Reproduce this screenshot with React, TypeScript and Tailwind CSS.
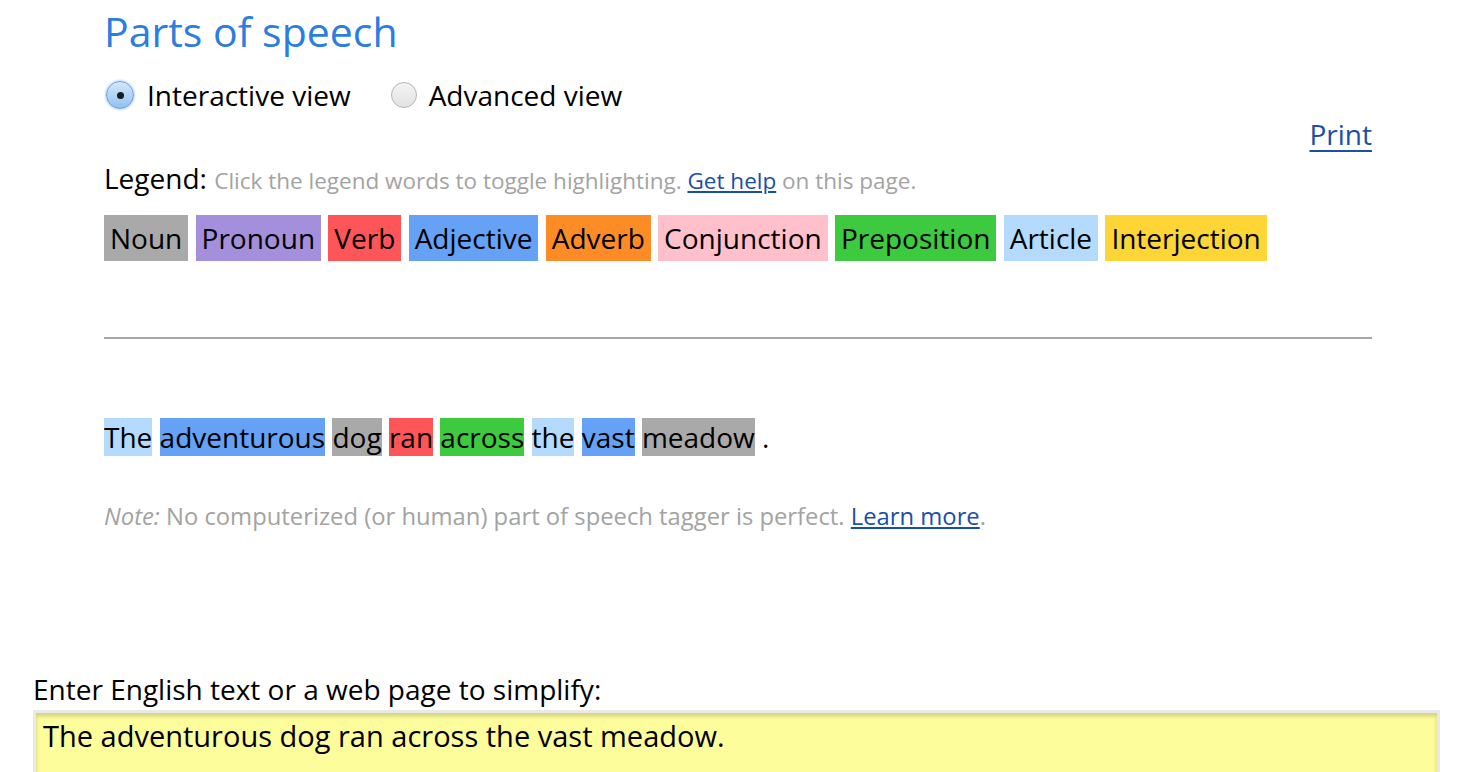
import React from "react";

const legend: [string, string][] = [
  ["Noun", "bg-[#a9a9a9]"],
  ["Pronoun", "bg-[#a38fdc]"],
  ["Verb", "bg-[#fe5558]"],
  ["Adjective", "bg-[#65a1f4]"],
  ["Adverb", "bg-[#fd8c26]"],
  ["Conjunction", "bg-[#ffc0cb]"],
  ["Preposition", "bg-[#3dca3e]"],
  ["Article", "bg-[#b4dafe]"],
  ["Interjection", "bg-[#fdd535]"],
];

const words: [string, string][] = [
  ["The", "bg-[#b4dafe]"],
  ["adventurous", "bg-[#65a1f4]"],
  ["dog", "bg-[#a9a9a9]"],
  ["ran", "bg-[#fe5558]"],
  ["across", "bg-[#3dca3e]"],
  ["the", "bg-[#b4dafe]"],
  ["vast", "bg-[#65a1f4]"],
  ["meadow", "bg-[#a9a9a9]"],
];

export default function App() {
  return (
    <div className="w-[1484px] h-[772px] overflow-hidden bg-white text-black font-['Open_Sans',sans-serif]">
      <div className="ml-[104px] w-[1268px]">
        <h1 className="pt-[4px] text-[41px] leading-[54px] text-[#2b7de1] font-normal">Parts of speech</h1>
        <div className="mt-[18px] flex items-center h-[38px] text-[28px]">
          <span className="ml-[2px] w-[28px] h-[28px] rounded-full border border-[#6a9fd8] bg-gradient-to-b from-[#d4e8fb] to-[#8fc1f0] shadow-[0_0_3px_#7fb2ea] flex items-center justify-center">
            <span className="w-[7px] h-[7px] rounded-full bg-[#1a1a1a]" />
          </span>
          <span className="ml-[13px]">Interactive view</span>
          <span className="ml-[40px] w-[26px] h-[26px] rounded-full border border-[#b5b5b5] bg-gradient-to-b from-[#f4f4f4] to-[#e2e2e2]" />
          <span className="ml-[12px]">Advanced view</span>
        </div>
        <div className="flex justify-end mt-[3px]">
          <a className="text-[28px] leading-[34px] text-[#1a4fa6] underline underline-offset-[5px] decoration-2">Print</a>
        </div>
        <div className="mt-[8px] text-[28px] leading-[38px]">
          Legend:{" "}
          <span className="text-[22.5px] text-[#a3a3a3]">
            Click the legend words to toggle highlighting.{" "}
            <a className="text-[#1a4fa6] underline">Get help</a> on this page.
          </span>
        </div>
        <div className="mt-[15px] text-[28px] leading-[46px]">
          {legend.map(([w, c], i) => (
            <React.Fragment key={w}>
              <span className={`inline-block px-[6px] h-[46px] ${c}`}>{w}</span>
              {i < legend.length - 1 ? " " : ""}
            </React.Fragment>
          ))}
        </div>
        <div className="mt-[76px] h-[2px] bg-[#a6a6a6]" />
        <div className="mt-[79px] text-[28px] leading-[38px]">
          {words.map(([w, c]) => (
            <React.Fragment key={w}>
              <span className={c}>{w}</span>{" "}
            </React.Fragment>
          ))}
          .
        </div>
        <div className="mt-[45px] text-[23.8px] leading-[30px] text-[#a3a3a3]">
          <i>Note:</i> No computerized (or human) part of speech tagger is perfect.{" "}
          <a className="text-[#1a4fa6] underline">Learn more</a>.
        </div>
      </div>
      <div className="ml-[33px] mt-[141px] w-[1407px]">
        <div className="text-[28px] leading-[34px]">Enter English text or a web page to simplify:</div>
        <div className="mt-[4px] h-[80px] bg-[#fdfd9c] border-t-[3px] border-l-[3px] border-r-[3px] border-[#e9e9e6] shadow-[inset_0_3px_4px_rgba(0,0,0,0.18)] px-[7px] pt-[6px] text-[29px] leading-[34px]">
          The adventurous dog ran across the vast meadow.
        </div>
      </div>
    </div>
  );
}
